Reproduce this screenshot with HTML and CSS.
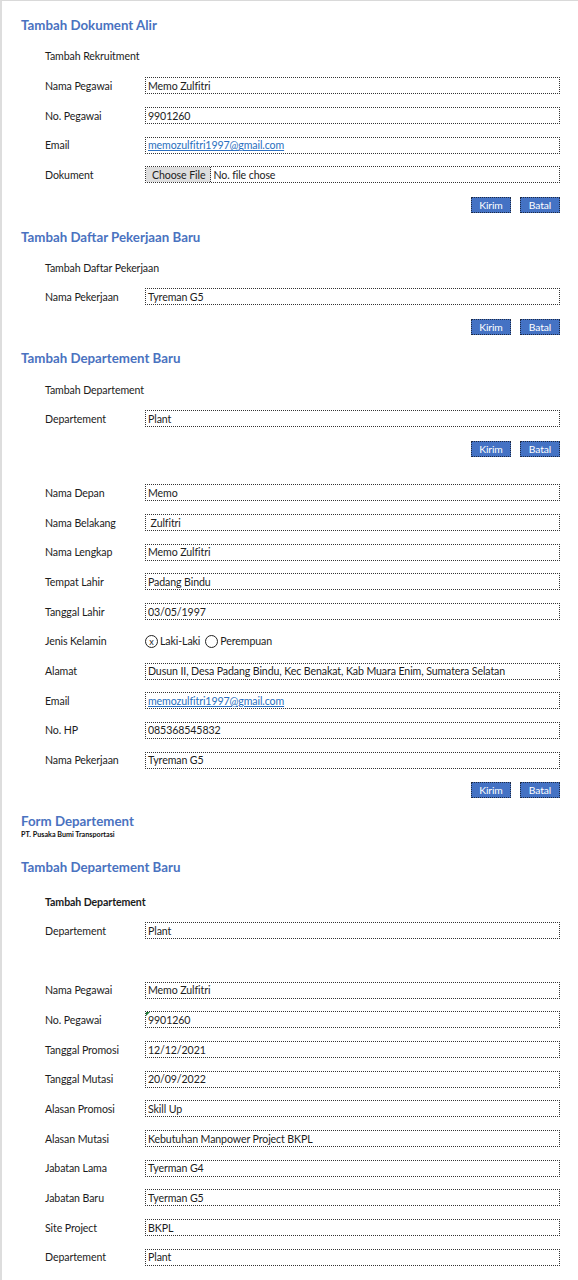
FILE: index.html
```html
<!DOCTYPE html>
<html>
<head>
<meta charset="utf-8">
<link rel="stylesheet" href="styles.css">
</head>
<body>
<main class="page">
  <h2 class="line title h30">Tambah Dokument Alir</h2>
  <div class="line sub h31">Tambah Rekruitment</div>
  <div class="line row"><span class="label">Nama Pegawai</span><div class="field">Memo Zulfitri</div></div>
  <div class="line row"><span class="label">No. Pegawai</span><div class="field">9901260</div></div>
  <div class="line row"><span class="label">Email</span><div class="field"><a class="link" href="#">memozulfitri1997@gmail.com</a></div></div>
  <div class="line row"><span class="label">Dokument</span><div class="field file"><span class="file-btn">Choose File</span><span class="file-name">No. file chose</span></div></div>
  <div class="line btns"><span class="btn">Kirim</span><span class="btn">Batal</span></div>

  <h2 class="line title h35">Tambah Daftar Pekerjaan Baru</h2>
  <div class="line sub h27">Tambah Daftar Pekerjaan</div>
  <div class="line row h31"><span class="label">Nama Pekerjaan</span><div class="field">Tyreman G5</div></div>
  <div class="line btns h29"><span class="btn">Kirim</span><span class="btn">Batal</span></div>

  <h2 class="line title h33">Tambah Departement Baru</h2>
  <div class="line sub h31">Tambah Departement</div>
  <div class="line row h27"><span class="label">Departement</span><div class="field">Plant</div></div>
  <div class="line btns h33"><span class="btn">Kirim</span><span class="btn">Batal</span></div>

  <div class="gap-a"></div>
  <div class="line row"><span class="label">Nama Depan</span><div class="field">Memo</div></div>
  <div class="line row"><span class="label">Nama Belakang</span><div class="field">&nbsp;Zulfitri</div></div>
  <div class="line row"><span class="label">Nama Lengkap</span><div class="field">Memo Zulfitri</div></div>
  <div class="line row"><span class="label">Tempat Lahir</span><div class="field">Padang Bindu</div></div>
  <div class="line row"><span class="label">Tanggal Lahir</span><div class="field">03/05/1997</div></div>
  <div class="line row"><span class="label">Jenis Kelamin</span>
    <div class="radios">
      <span class="radio checked">x</span><span class="radio-label">Laki-Laki</span>
      <span class="radio"></span><span class="radio-label">Perempuan</span>
    </div>
  </div>
  <div class="line row"><span class="label">Alamat</span><div class="field">Dusun II, Desa Padang Bindu, Kec Benakat, Kab Muara Enim, Sumatera Selatan</div></div>
  <div class="line row"><span class="label">Email</span><div class="field"><a class="link" href="#">memozulfitri1997@gmail.com</a></div></div>
  <div class="line row"><span class="label">No. HP</span><div class="field">085368545832</div></div>
  <div class="line row"><span class="label">Nama Pekerjaan</span><div class="field">Tyreman G5</div></div>
  <div class="line btns"><span class="btn">Kirim</span><span class="btn">Batal</span></div>

  <div class="gap-b"></div>
  <h1 class="line form-title">Form Departement</h1>
  <div class="line company">PT. Pusaka Bumi Transportasi</div>
  <div class="gap-c"></div>
  <h2 class="line title h41">Tambah Departement Baru</h2>
  <div class="line sub strong h28">Tambah Departement</div>
  <div class="line row"><span class="label">Departement</span><div class="field">Plant</div></div>
  <div class="gap-d"></div>
  <div class="line row"><span class="label">Nama Pegawai</span><div class="field">Memo Zulfitri</div></div>
  <div class="line row"><span class="label">No. Pegawai</span><div class="field flagged"><span class="flag"></span>9901260</div></div>
  <div class="line row"><span class="label">Tanggal Promosi</span><div class="field">12/12/2021</div></div>
  <div class="line row"><span class="label">Tanggal Mutasi</span><div class="field">20/09/2022</div></div>
  <div class="line row"><span class="label">Alasan Promosi</span><div class="field">Skill Up</div></div>
  <div class="line row"><span class="label">Alasan Mutasi</span><div class="field">Kebutuhan Manpower Project BKPL</div></div>
  <div class="line row"><span class="label">Jabatan Lama</span><div class="field">Tyerman G4</div></div>
  <div class="line row"><span class="label">Jabatan Baru</span><div class="field">Tyerman G5</div></div>
  <div class="line row"><span class="label">Site Project</span><div class="field">BKPL</div></div>
  <div class="line row"><span class="label">Departement</span><div class="field">Plant</div></div>
</main>
</body>
</html>
```
FILE: styles.css
```css
* {
  box-sizing: border-box;
  margin: 0;
  padding: 0;
}

html {
  background: #ffffff;
}

body {
  width: 578px;
  min-height: 1280px;
  background: #ffffff;
  border-top: 1px solid #d9d9d9;
  border-left: 2px solid #dddddd;
  font-family: Lato, "Open Sans", "Liberation Sans", sans-serif;
  font-size: 10.6px;
  letter-spacing: -0.1px;
  color: #1c1c1c;
}

.page {
  padding: 9px 18px 0 19px;
  display: flex;
  flex-direction: column;
}

.line {
  display: flex;
  align-items: center;
  height: 29.7px;
  flex: none;
}

.h27 { height: 27px; }
.h28 { height: 28.3px; }
.h29 { height: 29px; }
.h30 { height: 30px; }
.h31 { height: 31px; }
.h33 { height: 33px; }
.h35 { height: 35px; }
.h41 { height: 41.7px; }

.title {
  font-size: 13.3px;
  font-weight: 700;
  letter-spacing: 0;
  color: #4a72c0;
}

.form-title {
  height: 19px;
  font-size: 13.3px;
  font-weight: 700;
  letter-spacing: 0;
  color: #4a72c0;
}

.company {
  height: 8px;
  font-size: 7.2px;
  font-weight: 700;
  letter-spacing: 0;
  color: #111111;
}

.sub {
  padding-left: 24px;
}

.sub.strong {
  font-weight: 700;
}

.row {
  padding-left: 24px;
}

.label {
  width: 100px;
  flex: none;
}

.field {
  flex: 1;
  height: 17px;
  border: 1px dotted #333333;
  padding-left: 2px;
  display: flex;
  align-items: center;
  white-space: nowrap;
  overflow: hidden;
}

.link {
  color: #2a6fc0;
  text-decoration: underline;
}

.field.file {
  padding-left: 0;
}

.file-btn {
  height: 100%;
  display: flex;
  align-items: center;
  padding: 0 5px 0 6px;
  background: #dedede;
  border-right: 1px dotted #333333;
  color: #222222;
}

.file-name {
  padding-left: 2px;
}

.field.flagged {
  position: relative;
}

.flag {
  position: absolute;
  top: 0;
  left: 0;
  width: 0;
  height: 0;
  border-top: 4px solid #1f7a36;
  border-right: 4px solid transparent;
}

.radios {
  display: flex;
  align-items: center;
}

.radio {
  width: 13px;
  height: 13px;
  border: 1px solid #222222;
  border-radius: 50%;
  display: flex;
  align-items: center;
  justify-content: center;
  font-size: 9px;
  line-height: 1;
  margin-right: 2px;
}

.radio-label {
  margin-right: 5px;
}

.btns {
  justify-content: flex-end;
  gap: 9px;
}

.btn {
  width: 40px;
  height: 16px;
  background: #4472c4;
  color: #ffffff;
  border: 1px dotted #1d2a44;
  font-size: 10.3px;
  display: flex;
  align-items: center;
  justify-content: center;
}

.gap-a { height: 12.65px; flex: none; }
.gap-b { height: 7.15px; flex: none; }
.gap-c { height: 7.15px; flex: none; }
.gap-d { height: 29.7px; flex: none; }
```
